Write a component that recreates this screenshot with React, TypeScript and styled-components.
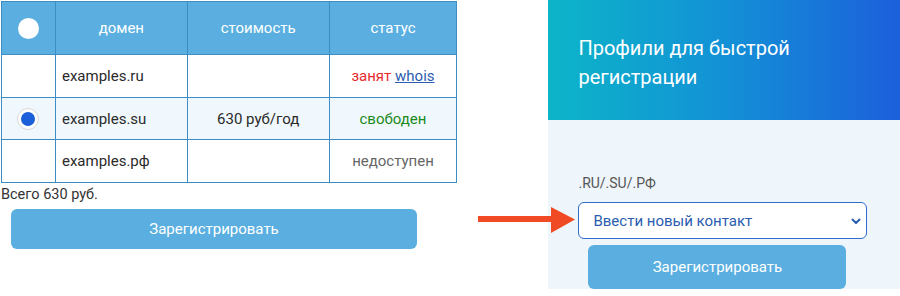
import React from "react";
import styled, { createGlobalStyle } from "styled-components";

const Global = createGlobalStyle`
  html, body { margin: 0; padding: 0; background: #fff; }
  body { font-family: Roboto, "Noto Sans", Arial, sans-serif; width: 900px; height: 296px; overflow: hidden; }
`;

const Page = styled.div`
  position: relative;
  display: flex;
  width: 900px;
  height: 296px;
`;

const Left = styled.div`
  width: 457px;
  padding: 1px 0 0 1px;
  display: flex;
  flex-direction: column;
`;

const Table = styled.table`
  border-collapse: collapse;
  table-layout: fixed;
  font-size: 15px;
  color: #2a2a2a;
`;

const Th = styled.th<{ w: number }>`
  width: ${(p) => p.w}px;
  height: 52px;
  padding: 0;
  background: #5aafe0;
  color: #fff;
  font-weight: 400;
  font-size: 15px;
  border: 1px solid #3d8dc3;
  text-align: center;
`;

const Tr = styled.tr<{ selected?: boolean }>`
  background: ${(p) => (p.selected ? "#f0f8fd" : "#fff")};
`;

const Td = styled.td<{ align?: string; h?: number }>`
  height: ${(p) => p.h ?? 42}px;
  padding: 0 6px;
  border: 1px solid #3d8dc3;
  text-align: ${(p) => p.align ?? "left"};
`;

const HeaderDot = styled.span`
  display: inline-block;
  width: 21px;
  height: 21px;
  border-radius: 50%;
  background: #fff;
  vertical-align: middle;
`;

const Radio = styled.span`
  display: inline-flex;
  align-items: center;
  justify-content: center;
  width: 20px;
  height: 20px;
  border-radius: 50%;
  background: #fff;
  border: 1px solid #d8d8d8;
  vertical-align: middle;
  &::after {
    content: "";
    width: 14px;
    height: 14px;
    border-radius: 50%;
    background: #1b5fd9;
  }
`;

const Status = styled.span<{ tone: "busy" | "free" | "na" }>`
  color: ${(p) => (p.tone === "busy" ? "#ea2a2f" : p.tone === "free" ? "#1b8a1e" : "#666")};
`;

const Whois = styled.a`
  color: #2a5db0;
  text-decoration: underline;
`;

const Total = styled.div`
  font-size: 14.5px;
  color: #333;
  margin-top: 3px;
  line-height: 18px;
`;

const Button = styled.button<{ w: number; h: number }>`
  width: ${(p) => p.w}px;
  height: ${(p) => p.h}px;
  border: none;
  border-radius: 6px;
  background: #5aafe0;
  color: #fff;
  font-family: Roboto, "Noto Sans", Arial, sans-serif;
  font-size: 15px;
  padding: 0;
`;

const LeftButtonWrap = styled.div`
  padding: 5px 0 0 10px;
`;

const Panel = styled.div`
  margin-left: 91px;
  width: 352px;
  height: 289px;
  display: flex;
  flex-direction: column;
  background: #eef6fb;
`;

const PanelHead = styled.div`
  height: 120px;
  box-sizing: border-box;
  padding: 34px 30px 0 30px;
  background: linear-gradient(90deg, #0cb5c8 0%, #1391d6 50%, #1c5fdb 100%);
  color: #fff;
  font-size: 20px;
  line-height: 29px;
`;

const PanelBody = styled.div`
  display: flex;
  flex-direction: column;
  padding: 54px 0 0 30px;
`;

const Label = styled.div`
  font-size: 14px;
  color: #555;
  line-height: 18px;
`;

const Select = styled.div`
  margin-top: 10px;
  width: 289px;
  height: 37px;
  box-sizing: border-box;
  border: 1px solid #2f6ccc;
  border-radius: 6px;
  background: #fff;
  display: flex;
  align-items: center;
  justify-content: space-between;
  padding: 0 4px 0 14px;
  color: #2a5db0;
  font-size: 15px;
`;

const PanelButtonWrap = styled.div`
  padding: 6px 0 0 10px;
`;

const Arrow = styled.svg`
  position: absolute;
  left: 477px;
  top: 206px;
`;

export default function App() {
  return (
    <Page>
      <Global />
      <Left>
        <Table>
          <thead>
            <tr>
              <Th w={53}>
                <HeaderDot />
              </Th>
              <Th w={131}>домен</Th>
              <Th w={141}>стоимость</Th>
              <Th w={127}>статус</Th>
            </tr>
          </thead>
          <tbody>
            <Tr>
              <Td />
              <Td>examples.ru</Td>
              <Td />
              <Td align="center">
                <Status tone="busy">занят</Status> <Whois>whois</Whois>
              </Td>
            </Tr>
            <Tr selected>
              <Td align="center" h={41}>
                <Radio />
              </Td>
              <Td h={41}>examples.su</Td>
              <Td align="center" h={41}>630 руб/год</Td>
              <Td align="center" h={41}>
                <Status tone="free">свободен</Status>
              </Td>
            </Tr>
            <Tr>
              <Td />
              <Td>examples.рф</Td>
              <Td />
              <Td align="center">
                <Status tone="na">недоступен</Status>
              </Td>
            </Tr>
          </tbody>
        </Table>
        <Total>Всего 630 руб.</Total>
        <LeftButtonWrap>
          <Button w={406} h={40}>Зарегистрировать</Button>
        </LeftButtonWrap>
      </Left>
      <Panel>
        <PanelHead>
          Профили для быстрой
          <br />
          регистрации
        </PanelHead>
        <PanelBody>
          <Label>.RU/.SU/.РФ</Label>
          <Select>
            <span>Ввести новый контакт</span>
            <svg width="12" height="12" viewBox="0 0 12 12">
              <path d="M2.5 4.5 L6 8 L9.5 4.5" fill="none" stroke="#2a5db0" strokeWidth="2" strokeLinecap="round" strokeLinejoin="round" />
            </svg>
          </Select>
          <PanelButtonWrap>
            <Button w={258} h={44}>Зарегистрировать</Button>
          </PanelButtonWrap>
        </PanelBody>
      </Panel>
      <Arrow width="100" height="28" viewBox="0 0 100 28">
        <rect x="1" y="10" width="76" height="6" fill="#f04a24" />
        <polygon points="74,1 98,13.5 74,27" fill="#f04a24" />
      </Arrow>
    </Page>
  );
}
